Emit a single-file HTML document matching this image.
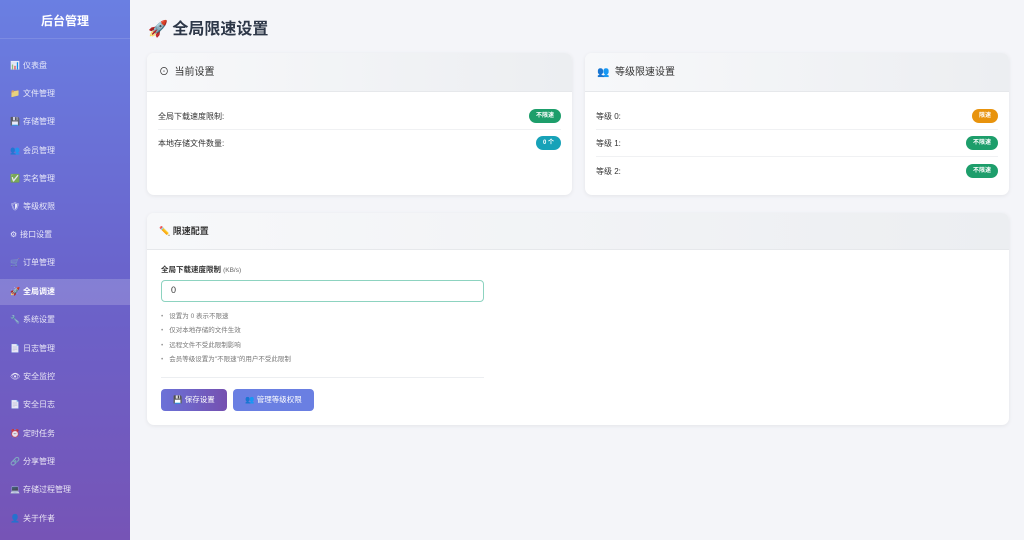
<!DOCTYPE html>
<html><head><meta charset="utf-8"><style>
*{box-sizing:border-box;margin:0;padding:0}
body{width:1024px;height:540px;overflow:hidden;background:#f4f5f9;font-family:"Liberation Sans","Noto Sans CJK SC",sans-serif;position:relative}
.sb{position:absolute;left:0;top:0;width:130px;height:540px;background:linear-gradient(180deg,#6a7fe2 0%,#6a64cc 50%,#7654b6 100%)}
.sb h1{position:absolute;top:12px;width:130px;text-align:center;color:#fff;font-size:12px;font-weight:bold}
.sb .line{position:absolute;top:38px;left:0;width:130px;height:1px;background:rgba(255,255,255,.12)}
.mi{position:absolute;left:0;width:130px;height:26px;line-height:26px;padding-left:10px;color:rgba(255,255,255,.85);font-size:8px}
.mi i{font-style:normal;font-size:8px;margin-right:3px}
.mi.act{background:rgba(255,255,255,.18);color:#fff;font-weight:bold}
.title{position:absolute;left:148px;top:15px;font-size:16px;font-weight:bold;color:#2d3748}
.card{position:absolute;background:#fff;border-radius:7px;box-shadow:0 1px 4px rgba(0,0,0,.07);overflow:hidden}
.ch{height:39px;background:linear-gradient(90deg,#f7f8fa,#eceef1);border-bottom:1px solid #e6e8eb;font-size:10px;color:#333;line-height:39px;padding-left:12px}
.row{position:absolute;left:11px;right:11px;height:27px;font-size:8px;color:#333;line-height:27px;border-bottom:1px solid #f0f1f3}
.bd{position:absolute;right:0;top:6px;height:14px;border-radius:7px;color:#fff;font-size:6px;font-weight:bold;padding:0 7px;display:flex;align-items:center}
.g{background:#1d9e6b}.b{background:#17a2b8}.o{background:#e8930d}
ul{position:absolute;left:14px;top:97px;font-size:6.5px;color:#777;list-style:none}
ul li{height:14.3px}
ul li:before{content:"•";margin-right:6px;color:#999}
.btn{position:absolute;top:176px;height:22px;border-radius:4px;color:#fff;font-size:7.5px;line-height:22px;text-align:center}
</style></head><body>
<div class="sb"><h1>后台管理</h1><div class="line"></div>
<div class="mi" style="top:53px"><i>📊</i>仪表盘</div>
<div class="mi" style="top:81px"><i>📁</i>文件管理</div>
<div class="mi" style="top:109px"><i>💾</i>存储管理</div>
<div class="mi" style="top:138px"><i>👥</i>会员管理</div>
<div class="mi" style="top:166px"><i>✅</i>实名管理</div>
<div class="mi" style="top:194px"><i>🛡</i>等级权限</div>
<div class="mi" style="top:222px"><i>⚙</i>接口设置</div>
<div class="mi" style="top:250px"><i>🛒</i>订单管理</div>
<div class="mi act" style="top:279px"><i>🚀</i>全局调速</div>
<div class="mi" style="top:307px"><i>🔧</i>系统设置</div>
<div class="mi" style="top:336px"><i>📄</i>日志管理</div>
<div class="mi" style="top:364px"><i>👁</i>安全监控</div>
<div class="mi" style="top:392px"><i>📄</i>安全日志</div>
<div class="mi" style="top:421px"><i>⏰</i>定时任务</div>
<div class="mi" style="top:449px"><i>🔗</i>分享管理</div>
<div class="mi" style="top:477px"><i>💻</i>存储过程管理</div>
<div class="mi" style="top:506px"><i>👤</i>关于作者</div>
</div>
<div class="title">🚀 全局限速设置</div>
<div class="card" style="left:147px;top:53px;width:425px;height:142px">
<div class="ch">⊙&nbsp; 当前设置</div>
<div class="row" style="top:50px">全局下载速度限制:<span class="bd g">不限速</span></div>
<div class="row" style="top:77px;border:none">本地存储文件数量:<span class="bd b">0 个</span></div>
</div>
<div class="card" style="left:585px;top:53px;width:424px;height:142px">
<div class="ch">👥&nbsp; 等级限速设置</div>
<div class="row" style="top:50px">等级 0:<span class="bd o">限速</span></div>
<div class="row" style="top:77px">等级 1:<span class="bd g">不限速</span></div>
<div class="row" style="top:105px;border:none">等级 2:<span class="bd g">不限速</span></div>
</div>
<div class="card" style="left:147px;top:213px;width:862px;height:212px">
<div class="ch" style="height:37px;line-height:37px;font-weight:bold;font-size:9px">✏️ 限速配置</div>
<div style="position:absolute;left:14px;top:51px;font-size:7.5px;font-weight:bold;color:#333">全局下载速度限制 <span style="font-weight:normal;color:#666;font-size:6.5px">(KB/s)</span></div>
<div style="position:absolute;left:14px;top:67px;width:323px;height:22px;border:1.5px solid #8dd3c0;border-radius:4px;font-size:9px;line-height:19px;padding-left:9px;color:#333">0</div>
<ul><li>设置为 0 表示不限速</li><li>仅对本地存储的文件生效</li><li>远程文件不受此限制影响</li><li>会员等级设置为"不限速"的用户不受此限制</li></ul>
<div style="position:absolute;left:14px;top:164px;width:323px;height:1px;background:#eceef1"></div>
<div class="btn" style="left:14px;width:66px;background:linear-gradient(90deg,#6b72d8,#7550b0)">💾 保存设置</div>
<div class="btn" style="left:86px;width:81px;background:#6a7fe2">👥 管理等级权限</div>
</div>
</body></html>
